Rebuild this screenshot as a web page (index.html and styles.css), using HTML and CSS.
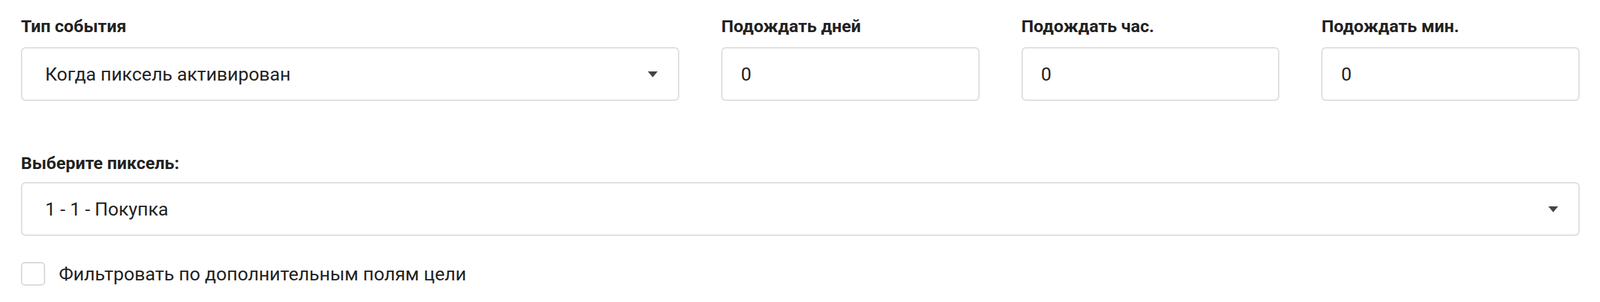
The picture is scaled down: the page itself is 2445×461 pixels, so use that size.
FILE: index.html
```html
<!DOCTYPE html>
<html lang="ru">
<head>
    <meta charset="UTF-8">
    <meta name="viewport" content="width=device-width, initial-scale=1.0">
    <title>Событие пикселя</title>
    <link rel="stylesheet" href="styles.css">
</head>
<body>
    <form class="event-form">
        <!-- Event type and delay -->
        <div class="row row-top">
            <div class="field">
                <label class="field-label">Тип события</label>
                <div class="select">
                    <span>Когда пиксель активирован</span>
                    <svg class="arrow" width="15" height="9" viewBox="0 0 15 9"><path d="M0 0h15L7.5 9z" fill="#444"/></svg>
                </div>
            </div>
            <div class="field">
                <label class="field-label" for="days">Подождать дней</label>
                <input class="input" type="text" id="days" value="0">
            </div>
            <div class="field">
                <label class="field-label" for="hours">Подождать час.</label>
                <input class="input" type="text" id="hours" value="0">
            </div>
            <div class="field">
                <label class="field-label" for="mins">Подождать мин.</label>
                <input class="input" type="text" id="mins" value="0">
            </div>
        </div>

        <!-- Pixel -->
        <div class="field field-pixel">
            <label class="field-label">Выберите пиксель:</label>
            <div class="select">
                <span>1 - 1 - Покупка</span>
                <svg class="arrow" width="15" height="9" viewBox="0 0 15 9"><path d="M0 0h15L7.5 9z" fill="#444"/></svg>
            </div>
        </div>

        <label class="check">
            <input type="checkbox">
            <span>Фильтровать по дополнительным полям цели</span>
        </label>
    </form>
</body>
</html>
```

FILE: styles.css
```css
body {
    margin: 0;
    font-family: Roboto, "Liberation Sans", sans-serif;
    color: #222;
    background: #fff;
}

.event-form {
    padding: 25px 31px 0 32px;
}

.row-top {
    display: grid;
    grid-template-columns: 2.55fr 1fr 1fr 1fr;
    gap: 64px;
}

.field-label {
    display: block;
    font-size: 26.5px;
    font-weight: 700;
    line-height: 30px;
    margin-bottom: 17px;
    color: #222;
}

.field-pixel {
    margin-top: 80px;
}

.field-pixel .field-label {
    margin-bottom: 14px;
}

.select,
.input {
    box-sizing: border-box;
    height: 82px;
    width: 100%;
    border: 2px solid #dedede;
    border-radius: 7px;
    background: #fff;
    font-family: inherit;
    font-size: 28.4px;
    color: #222;
}

.select {
    display: flex;
    align-items: center;
    justify-content: space-between;
    padding: 0 31px 0 35px;
}

.input {
    padding: 0 28px;
    outline: none;
}

.check {
    display: flex;
    align-items: center;
    gap: 21px;
    margin-top: 40px;
    font-size: 28.5px;
    color: #222;
}

.check input {
    appearance: none;
    margin: 0;
    width: 37px;
    height: 36px;
    border: 2px solid #d9d9d9;
    border-radius: 6px;
    background: #fff;
}
```
